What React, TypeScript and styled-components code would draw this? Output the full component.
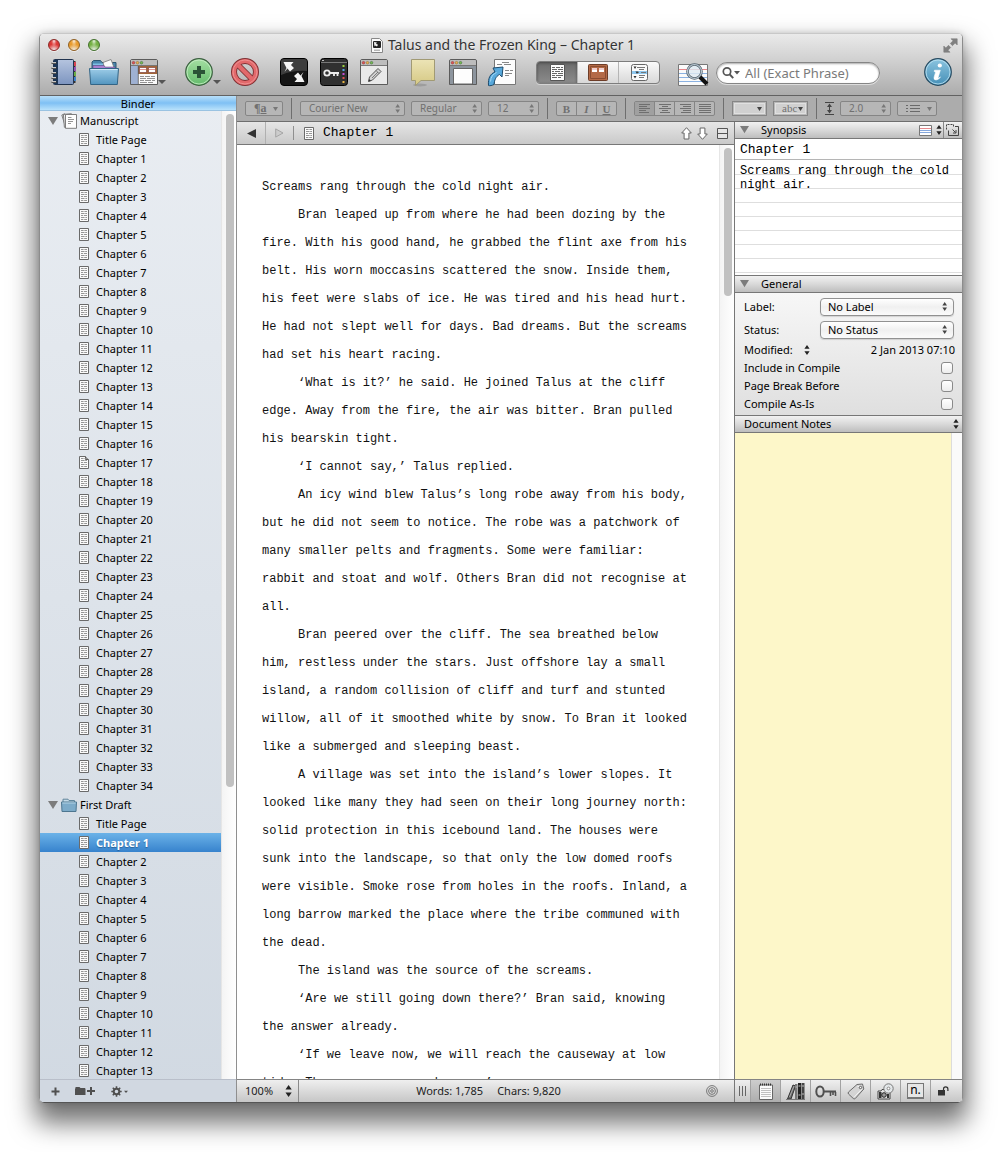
import React from "react";
import styled, { createGlobalStyle, css } from "styled-components";

const ui = `"Noto Sans", "Open Sans", "Liberation Sans", sans-serif`;
const mono = `"Liberation Mono", "Courier New", monospace`;
const metal = "linear-gradient(#f2f2f2, #d9d9d9 50%, #bdbdbd)";

const GlobalStyle = createGlobalStyle`
  *, *::before, *::after { box-sizing: border-box; }
  body { margin: 0; background: #fff; font: 11px/16px ${ui}; color: #000; }
  button, select, input, textarea { font: inherit; color: inherit; margin: 0; }
  button { padding: 0; border: 0; background: none; }
  svg { display: block; flex: none; }
  h1, h2, p, ul, dl, dt, dd { margin: 0; padding: 0; font-weight: inherit; font-size: inherit; }
  ul { list-style: none; }
`;

const Desktop = styled.div`
  display: flex;
  height: 100vh;
  min-height: 600px;
  padding: 33px 38px 49px 39px;
  overflow: hidden;
`;

const Window = styled.main`
  flex: 1;
  min-width: 0;
  display: flex;
  flex-direction: column;
  border: 1px solid #8c8c8c;
  border-top-color: #c8c8c8;
  border-bottom-color: #555;
  border-radius: 5px;
  overflow: hidden;
  box-shadow: 0 16px 26px 4px rgba(0, 0, 0, 0.56), 0 0 6px rgba(0, 0, 0, 0.15);
`;

/* ---------- title bar and toolbar ---------- */

const Chrome = styled.header`
  flex: none;
  background: linear-gradient(#eaeaea, #cfcfcf 45%, #acacac);
  border-bottom: 1px solid #626262;
`;

const TitleBar = styled.div`
  height: 22px;
  display: grid;
  grid-template-columns: 1fr auto 1fr;
  align-items: center;
  padding: 0 4px 0 8px;
`;

const Lights = styled.div`
  display: flex;
  gap: 8px;
`;

const Light = styled.button<{ $hue: string; $edge: string }>`
  width: 12px;
  height: 12px;
  border-radius: 50%;
  border: 1px solid ${(p) => p.$edge};
  background: radial-gradient(ellipse at 50% 10%, #fffd 0, #fff4 25%, transparent 42%),
    radial-gradient(circle at 50% 100%, #fff9 0, ${(p) => p.$hue} 55%);
  box-shadow: 0 1px 0 #fff8;
`;

const Title = styled.h1`
  display: flex;
  align-items: center;
  gap: 5px;
  font-size: 14px;
  line-height: 20px;
  color: #333;
  text-shadow: 0 1px 0 #fff8;
`;

const ZoomButton = styled.button`
  justify-self: end;
`;

const Toolbar = styled.div`
  display: flex;
  align-items: flex-start;
  gap: 17px;
  height: 39px;
  padding: 0 8px;
`;

const ToolGroup = styled.div`
  display: flex;
  gap: 8px;
`;

const Tool = styled.button<{ $menu?: boolean }>`
  display: flex;
  align-items: center;
  width: ${(p) => (p.$menu ? 38 : 32)}px;
  height: 32px;
`;

const MenuMark = styled.span`
  align-self: flex-end;
  margin: 0 0 4px -2px;
  border: 4px solid transparent;
  border-top-color: #555;
  border-bottom: 0;
`;

const Segments = styled.div`
  display: flex;
  margin-top: 5px;
  width: 124px;
  height: 23px;
  border: 1px solid #7d7d7d;
  border-radius: 4px;
  overflow: hidden;
  background: linear-gradient(#fafafa, #d8d8d8);
  box-shadow: 0 1px 0 #fff6;
`;

const Segment = styled.button<{ $on?: boolean }>`
  flex: 1;
  display: grid;
  place-items: center;
  ${(p) => p.$on && css`
    background: linear-gradient(#6c6c6c, #8b8b8b);
    box-shadow: inset 0 1px 3px #333a;
  `}
  & + & { border-left: 1px solid #b5b5b5; }
`;

const SearchBox = styled.label`
  display: flex;
  align-items: center;
  gap: 5px;
  width: 164px;
  height: 22px;
  margin-top: 6px;
  padding: 0 8px 0 5px;
  border: 1px solid #858585;
  border-radius: 11px;
  background: #fff;
  box-shadow: inset 0 1px 2px #0005, 0 1px 0 #fff8;
`;

const SearchInput = styled.input`
  flex: 1;
  min-width: 0;
  padding: 0;
  border: 0;
  outline: 0;
  background: none;
  font-size: 13px;
  line-height: 18px;
  &::placeholder { color: #7a7a7a; opacity: 1; }
`;

const FieldWithIcon = styled.div`
  display: flex;
  gap: 7px;
`;

const InfoTool = styled(Tool)`
  margin-left: auto;
`;

/* ---------- body ---------- */

const Body = styled.div`
  flex: 1;
  min-height: 0;
  display: flex;
`;

const Binder = styled.nav`
  flex: none;
  width: 197px;
  display: flex;
  flex-direction: column;
  border-right: 1px solid #8f8f8f;
  background: linear-gradient(#e9edf2, #d1d9e2);
`;

const BinderTitle = styled.h2`
  flex: none;
  height: 15px;
  text-align: center;
  line-height: 15px;
  background: linear-gradient(#b8e0fa, #7fc0f4 50%, #b9e2fb);
  border-bottom: 1px solid #9ac3e2;
`;

const Scroller = styled.div`
  flex: 1;
  min-height: 0;
  display: flex;
`;

const Track = styled.div`
  flex: none;
  width: 15px;
  padding: 3px 3px 3px 4px;
  border-left: 1px solid #e6e6e6;
  background: linear-gradient(90deg, #f4f4f4, #fff);
`;

const Thumb = styled.div<{ $share: number }>`
  height: ${(p) => p.$share}%;
  width: 8px;
  border-radius: 4px;
  background: #c1c1c1;
`;

const Tree = styled.ul`
  flex: 1;
  min-width: 0;
  overflow: hidden;
`;

const Row = styled.button<{ $group?: boolean; $on?: boolean }>`
  display: flex;
  align-items: center;
  gap: ${(p) => (p.$group ? 3 : 7)}px;
  width: 100%;
  height: 19px;
  padding-left: ${(p) => (p.$group ? 8 : 39)}px;
  text-align: left;
  white-space: nowrap;
  ${(p) => p.$on && css`
    color: #fff;
    font-weight: 700;
    text-shadow: 0 1px 1px #0246;
    background: linear-gradient(#6bb2e8, #3783cd);
  `}
`;

const BinderFooter = styled.div`
  flex: none;
  display: flex;
  align-items: center;
  gap: 15px;
  height: 23px;
  padding-left: 11px;
  background: #d1d8e1;
  border-top: 1px solid #b9bfca;
`;

const Work = styled.div`
  flex: 1;
  min-width: 0;
  display: flex;
  flex-direction: column;
`;

/* ---------- format bar ---------- */

const FormatBar = styled.div`
  flex: none;
  display: flex;
  align-items: center;
  gap: 8px;
  height: 26px;
  padding: 0 8px;
  background: #acacac;
  border-bottom: 1px solid #6e6e6e;
  color: #707070;
`;

const FormatGroup = styled.div`
  display: flex;
  align-items: center;
  gap: 6px;
`;

const Divider = styled.span`
  width: 1px;
  height: 21px;
  background: #6e6e6e;
`;

const Chip = styled.button<{ $w: number; $light?: boolean }>`
  display: flex;
  align-items: center;
  justify-content: space-between;
  width: ${(p) => p.$w}px;
  height: 15px;
  padding: 0 4px 0 8px;
  border: 1px solid #858585;
  border-radius: ${(p) => (p.$light ? 0 : 2)}px;
  background: ${(p) => (p.$light ? "#d0d0d0" : "#b6b6b6")};
  box-shadow: ${(p) => (p.$light ? "inset 0 0 0 1px #b8b8b8, inset 0 0 0 2px #e0e0e0" : "none")};
  font-size: 10px;
  line-height: 12px;
`;

const ChipMark = styled.span`
  font: 700 12px/13px "Liberation Serif", serif;
`;

const ChipWord = styled.span`
  font: 11px/13px "Liberation Serif", serif;
`;

const PopSelect = styled.label<{ $w: number }>`
  display: flex;
  align-items: center;
  width: ${(p) => p.$w}px;
  height: 15px;
  padding: 0 4px 0 8px;
  border: 1px solid #858585;
  border-radius: 2px;
  background: #b6b6b6;
`;

const BareSelect = styled.select`
  appearance: none;
  flex: 1;
  min-width: 0;
  padding: 0;
  border: 0;
  outline: 0;
  background: none;
  font-size: 10px;
  line-height: 13px;
`;

const Joined = styled.div`
  display: flex;
  height: 15px;
  border: 1px solid #858585;
  border-radius: 2px;
  background: #b6b6b6;
`;

const JoinedButton = styled.button<{ $on?: boolean; $look?: "b" | "i" | "u" }>`
  width: 20px;
  display: grid;
  place-items: center;
  font: 700 11px/12px "Liberation Serif", serif;
  font-style: ${(p) => (p.$look === "i" ? "italic" : "normal")};
  text-decoration: ${(p) => (p.$look === "u" ? "underline" : "none")};
  background: ${(p) => (p.$on ? "#a0a0a0" : "none")};
  &:first-child { width: 19px; }
  & + & { border-left: 1px solid #858585; }
`;

/* ---------- editor ---------- */

const Panes = styled.div`
  flex: 1;
  min-height: 0;
  display: flex;
`;

const Editor = styled.section`
  flex: 1;
  min-width: 0;
  display: flex;
  flex-direction: column;
  background: #fff;
`;

const EditorHead = styled.div`
  flex: none;
  display: flex;
  align-items: center;
  height: 23px;
  background: linear-gradient(#e6e6e6, #c9c9c9);
  border-bottom: 1px solid #777;
`;

const NavButton = styled.button`
  display: grid;
  place-items: center;
  width: 28px;
  height: 22px;
  & + & { border-left: 1px solid #b0b0b0; }
`;

const DocName = styled.h2`
  flex: 1;
  display: flex;
  align-items: center;
  gap: 9px;
  padding-left: 10px;
  height: 14px;
  border-left: 1px solid #8f8f8f;
  font: 13px/16px ${mono};
`;

const HeadTools = styled.div`
  display: flex;
  align-items: center;
  gap: 5px;
  padding-right: 6px;
`;

const NavSplit = styled.button`
  padding-left: 4px;
`;

const Page = styled.article`
  flex: 1;
  min-width: 0;
  overflow: hidden;
  padding: 28px 30px 0 25px;
  font: 12px/28px ${mono};
  color: #111;
`;

const Paragraph = styled.p<{ $first?: boolean }>`
  text-indent: ${(p) => (p.$first ? 0 : 36)}px;
`;

const StatusBar = styled.footer`
  flex: none;
  display: flex;
  align-items: center;
  height: 23px;
  background: linear-gradient(#efefef, #c6c6c6);
  border-top: 1px solid #848484;
  color: #222;
`;

const ZoomLevel = styled.button`
  display: flex;
  align-items: center;
  justify-content: space-between;
  width: 62px;
  height: 22px;
  padding: 0 6px 0 8px;
  border-right: 1px solid #8a8a8a;
`;

const Counts = styled.div`
  flex: 1;
  display: flex;
  justify-content: center;
  gap: 14px;
  padding-right: 28px;
`;

const TargetButton = styled.button`
  padding-right: 16px;
`;

/* ---------- inspector ---------- */

const Inspector = styled.aside`
  flex: none;
  width: 228px;
  display: flex;
  flex-direction: column;
  border-left: 1px solid #777;
  background: #ececec;
`;

const SectionHead = styled.div<{ $ruled?: boolean }>`
  flex: none;
  display: flex;
  align-items: center;
  height: ${(p) => (p.$ruled ? 18 : 17)}px;
  padding-left: 5px;
  background: ${metal};
  border-bottom: 1px solid #777;
  border-top: ${(p) => (p.$ruled ? "1px solid #777" : "0")};
`;

const SectionTitle = styled.h2<{ $plain?: boolean }>`
  flex: 1;
  padding-left: ${(p) => (p.$plain ? 4 : 12)}px;
`;

const CardTools = styled.div`
  display: flex;
  align-items: center;
  gap: 4px;
  padding-right: 3px;
`;

const CornerTool = styled.button`
  height: 16px;
  display: grid;
  place-items: center;
  padding-left: 2px;
  margin-left: -3px;
  border-left: 1px solid #888;
`;

const CardTitle = styled.input`
  flex: none;
  height: 21px;
  width: 100%;
  padding: 0 5px;
  border: 0;
  border-bottom: 1px solid #b5b5b5;
  outline: 0;
  background: #fff;
  font: 13px/16px ${mono};
`;

const CardText = styled.textarea`
  flex: none;
  display: block;
  width: 100%;
  height: 115px;
  padding: 4px 5px;
  border: 0;
  outline: 0;
  resize: none;
  overflow: hidden;
  background: repeating-linear-gradient(#fff 0 13px, #dedede 13px 14px) 0 1px;
  font: 12px/14px ${mono};
`;

const Fields = styled.div`
  flex: none;
  padding: 2px 7px 2px 9px;
  background: linear-gradient(#f7f7f7, #dfdfdf);
`;

const Field = styled.div<{ $tall?: boolean }>`
  display: flex;
  align-items: center;
  height: ${(p) => (p.$tall ? 23 : 18)}px;
`;

const FieldName = styled.label`
  flex: 1;
`;

const ModifiedName = styled.span`
  flex: 1;
  display: flex;
  align-items: center;
  gap: 11px;
`;

const FieldSelect = styled.span`
  display: flex;
  align-items: center;
  width: 134px;
  height: 18px;
  margin-right: 1px;
  padding: 0 6px 0 7px;
  border: 1px solid #919191;
  border-radius: 4px;
  background: linear-gradient(#fff, #f0f0f0 50%, #fbfbfb);
  box-shadow: 0 1px 1px #0002;
`;

const FieldSelectInput = styled(BareSelect)`
  font-size: 11px;
  line-height: 16px;
`;

const Check = styled.input`
  appearance: none;
  width: 12px;
  height: 12px;
  margin-right: 2px;
  border: 1px solid #8a8a8a;
  border-radius: 3px;
  background: linear-gradient(#fff, #ededed);
`;

const NotesArea = styled.div`
  flex: 1;
  min-height: 0;
  display: flex;
`;

const Notes = styled.textarea`
  flex: 1;
  min-width: 0;
  padding: 5px;
  border: 0;
  outline: 0;
  resize: none;
  background: #fdf7c9;
`;

const NotesTrack = styled.div`
  width: 11px;
  border-left: 1px solid #dcdcdc;
  background: #fafafa;
`;

const InspectorTabs = styled.div`
  flex: none;
  display: flex;
  height: 23px;
  border-top: 1px solid #848484;
  background: linear-gradient(#efefef, #c6c6c6);
`;

const Tab = styled.button<{ $on?: boolean; $w?: number }>`
  width: ${(p) => p.$w ?? 30}px;
  display: grid;
  place-items: center;
  border-right: 1px solid #a2a2a2;
  background: ${(p) => (p.$on ? "linear-gradient(#cdcdcd, #adadad)" : "none")};
  &:last-child { width: auto; flex: 1; border-right: 0; padding-right: 7px; }
`;

/* ---------- drawings ---------- */

const Updown = ({ c = "#222", s = 10 }: { c?: string; s?: number }) => (
  <svg width={(s * 6) / 10} height={s} viewBox="0 0 6 10" fill={c}>
    <path d="M3 0 5.6 3.8H.4zM3 10 .4 6.2h5.2z" />
  </svg>
);
const Down = ({ c = "#666", w = 6 }: { c?: string; w?: number }) => (
  <svg width={w} height={w * 0.8} viewBox="0 0 10 8" fill={c}><path d="M0 0h10L5 8z" /></svg>
);

const PageIcon = ({ fold }: { fold?: boolean }) => (
  <svg width="10" height="13" viewBox="0 0 10 13">
    <path d={fold ? "M.5.5h6l3 3v9h-9z" : "M.5.5h9v12h-9z"} fill="#fbfbfb" stroke="#6a6a6a" />
    {fold && <path d="M6.5.5v3h3" fill="#ccc" stroke="#5c5c5c" />}
    <path d="M2 2.5h2.6M5.4 2.5H8M2 4.5h3.6M6.2 4.5H8M2 6.5h2M4.8 6.5H8M2 8.5h3.6M6.4 8.5H8M2 10.5h2.4M5.2 10.5H8" stroke="#8a8a8a" strokeWidth=".9" />
  </svg>
);

const StackIcon = () => (
  <svg width="16" height="16" viewBox="0 0 16 16" stroke="#707070" strokeWidth=".9">
    <path d="m.8 2 3-1.2 4 11.5-3.4 1.2z" fill="#e9e9e9" />
    <path d="m2.4 1.4 8-.7.6 13-7.6.6z" fill="#f1f1f1" />
    <path d="M4.5 1.5h11v13.8h-11z" fill="#fdfdfd" />
    <path d="M7 4.5h3.5M7 6.5h6M7 8.5h5M7 10.5h3" stroke="#888" />
  </svg>
);

const FolderIcon = () => (
  <svg width="16" height="14" viewBox="0 0 16 14">
    <path d="M2 3V1.2h5l1 1.3h5.5V5H2z" fill="#c5dbe8" stroke="#60869c" />
    <path d="M.5 4h15l-.5 9.500H1z" fill="#7dabc9" stroke="#4d7690" />
    <path d="M1.3 5h13.4" stroke="#b4d3e5" />
  </svg>
);

const TitleDoc = () => (
  <svg width="12" height="15" viewBox="0 0 12 15">
    <path d="M.5.5h8l3 3v11H.5z" fill="#fafafa" stroke="#888" />
    <rect x="2" y="3" width="8" height="7" rx="1" fill="#222" />
    <path d="m3 4 3 .4-1 1.3 2 1-1 1.700-2-1-.6 1.200z" fill="#eee" />
    <path d="M3 12.200h6" stroke="#999" />
  </svg>
);

const ResizeArrows = () => (
  <svg width="15" height="15" viewBox="0 0 15 15" fill="#808080" stroke="#808080" strokeWidth=".6">
    <path d="M8 .8h6.200V7l-2-2-2.700 2.700-2.200-2.200L10 2.800zM7 14.200H.8V8l2 2 2.700-2.700 2.200 2.200L5 12.200z" />
  </svg>
);

const Notebook = () => (
  <svg width="32" height="32" viewBox="0 0 32 32">
    <defs>
      <linearGradient id="cover" x2="0" y2="1"><stop stopColor="#b5c4df" /><stop offset="1" stopColor="#7d95c0" /></linearGradient>
    </defs>
    <path d="M24 5h3.500v22H24z" fill="#333" />
    <path d="M24.500 6h3.500v4h-3.500z" fill="#d94350" />
    <path d="M24.500 11h3.500v4h-3.500z" fill="#9454b5" />
    <path d="M24.500 16h3.500v4h-3.500z" fill="#6aac45" />
    <path d="M24.500 21h3.500v4h-3.500z" fill="#3f82c8" />
    <rect x="5.500" y="3.500" width="20" height="25" rx="1" fill="url(#cover)" stroke="#22344f" />
    <path d="M6 4h4v24H6z" fill="#1c3656" />
    <path d="M3.500 7h5M3.500 12h5M3.500 17h5M3.500 22h5M3.500 26h5" stroke="#333" strokeWidth="2" />
    <path d="M3.500 6.700h4.500M3.500 11.700h4.500M3.500 16.700h4.500M3.500 21.700h4.500M3.500 25.700h4.500" stroke="#eee" />
  </svg>
);

const BigFolder = () => (
  <svg width="32" height="32" viewBox="0 0 32 32">
    <defs>
      <linearGradient id="fold" x2="0" y2="1"><stop stopColor="#9dcce8" /><stop offset="1" stopColor="#5295bf" /></linearGradient>
    </defs>
    <path d="M4 12V6l1.500-1.500h7L14 6.500h14V13H4z" fill="#4b86ad" stroke="#2e5570" />
    <path d="M5 7.500h13v2H5z" fill="#7fc0e6" />
    <path d="m15 6.500 8-3 3 8-9 2z" fill="#fafafa" stroke="#777" strokeWidth=".8" />
    <path d="M5 9.500h11l1 1.500h10v2H5z" fill="#a97fd0" stroke="#56417a" strokeWidth=".5" />
    <path d="M1.500 12.500h29l-1.200 16H2.700z" fill="url(#fold)" stroke="#336586" />
    <path d="M2.500 13.500h27" stroke="#cfe8f6" />
  </svg>
);

const MiniWindow = ({ children, body = "#e9e9e9" }: { children?: React.ReactNode; body?: string }) => (
  <svg width="32" height="32" viewBox="0 0 32 32">
    <path d="M2.500 5a1.500 1.500 0 0 1 1.500-1.500h24A1.500 1.500 0 0 1 29.500 5v23.500h-27z" fill={body} stroke="#5b5b5b" />
    <path d="M3 5a1 1 0 0 1 1-1h24a1 1 0 0 1 1 1v4H3z" fill="#bdbdbd" />
    <path d="M3 9.500h26" stroke="#777" />
    <circle cx="5.500" cy="6.700" r="1.300" fill="#e05252" stroke="#833" strokeWidth=".5" />
    <circle cx="9.500" cy="6.700" r="1.300" fill="#e9b14c" stroke="#863" strokeWidth=".5" />
    <circle cx="13.500" cy="6.700" r="1.300" fill="#79bb51" stroke="#363" strokeWidth=".5" />
    {children}
  </svg>
);

const LayoutIcon = () => (
  <MiniWindow body="#fafafa">
    <path d="M3 10h7v18H3z" fill="#9fb1d2" />
    <path d="M10 10h19v8H10z" fill="#a26537" />
    <path d="M11.500 11.500h7v5h-7zM20.500 11.500h7v5h-7z" fill="#fff" stroke="#733" strokeWidth=".6" />
    <path d="M12 13.500h6M21 13.500h6" stroke="#d77" strokeWidth=".8" />
    <path d="M12 20.500h4M17 20.500h5M23 20.500h4M12 22.500h6M19 22.500h8M12 24.500h4M17 24.500h6M24 24.500h3M12 26.500h7M20 26.500h5" stroke="#777" strokeWidth=".8" />
    <path d="M10.300 10v18" stroke="#555" strokeWidth=".8" />
  </MiniWindow>
);

const AddIcon = () => (
  <svg width="32" height="32" viewBox="0 0 32 32">
    <defs><linearGradient id="add" x2="0" y2="1"><stop stopColor="#a5dfa3" /><stop offset="1" stopColor="#64bb6c" /></linearGradient></defs>
    <circle cx="16" cy="16" r="13.300" fill="url(#add)" stroke="#3c5f40" strokeWidth="1.200" />
    <circle cx="16" cy="16" r="12" fill="none" stroke="#c8efc6" strokeWidth=".8" />
    <path d="M14 10h4v4h4v4h-4v4h-4v-4h-4v-4h4z" fill="#2a5236" />
  </svg>
);

const StopIcon = () => (
  <svg width="32" height="32" viewBox="0 0 32 32" fill="none">
    <circle cx="16" cy="16" r="11" stroke="#7e3033" strokeWidth="6" />
    <path d="m8.500 8.500 15 15" stroke="#7e3033" strokeWidth="6" />
    <circle cx="16" cy="16" r="11" stroke="#e2696b" strokeWidth="4.200" />
    <path d="m8.500 8.500 15 15" stroke="#e2696b" strokeWidth="4.200" />
    <circle cx="16" cy="16" r="12" stroke="#f09b9b" strokeWidth=".8" />
  </svg>
);

const ComposeIcon = () => (
  <svg width="32" height="32" viewBox="0 0 32 32">
    <rect x="2.500" y="2.500" width="27" height="27" rx="3.500" fill="#161616" stroke="#000" />
    <path d="M3 6a3 3 0 0 1 3-3h20a3 3 0 0 1 3 3v9q-13-1-26 4z" fill="#3d3d3d" />
    <path d="M5.500 6h10l-2.500 3 3 3-4 3.500-2.500-3L6.500 16l2-4z" fill="#f5f5f5" />
    <path d="M26.500 26h-10l2.500-3-3-3 4-3.500 2.500 3L25.500 16l-2 4z" fill="#f5f5f5" />
  </svg>
);

const KeywordsIcon = () => (
  <svg width="32" height="32" viewBox="0 0 32 32">
    <rect x="2.500" y="2.500" width="27" height="27" rx="3" fill="#303030" stroke="#000" />
    <path d="M3 6.500h26" stroke="#777" />
    <path d="M4 4.500h2" stroke="#bbb" />
    <circle cx="9" cy="17" r="2.700" fill="none" stroke="#ececec" strokeWidth="1.800" />
    <path d="M12 17h9M16 17v3M19.500 17v3" stroke="#ececec" strokeWidth="1.800" />
    <path d="M24.500 9h2v2h-2z" fill="#9ad13c" />
    <path d="M24.500 13h2v2h-2z" fill="#4fa7e6" />
    <path d="M24.500 17h2v2h-2z" fill="#c04bd4" />
    <path d="M24.500 21h2v2h-2z" fill="#e05050" />
    <path d="M24.500 25h2v2h-2z" fill="#e8b341" />
  </svg>
);

const PencilWindow = () => (
  <MiniWindow>
    <path d="m10.500 25.500 1-4.500L20 12.500l3 3-8.500 8.500z" fill="#d2d2d2" stroke="#555" />
    <path d="m18 14.500 3 3M14 22l6-6" stroke="#666" strokeWidth=".8" />
    <path d="m10.500 25.500.6-2.500 1.900 1.900z" fill="#333" />
  </MiniWindow>
);

const NoteIcon = () => (
  <svg width="32" height="32" viewBox="0 0 32 32">
    <defs><linearGradient id="note" x2="0" y2="1"><stop stopColor="#ece4b6" /><stop offset="1" stopColor="#d5c883" /></linearGradient></defs>
    <ellipse cx="13" cy="29" rx="7" ry="1.500" fill="#0002" />
    <path d="M4.500 3.500h23v21H14l-5.500 5v-5h-4z" fill="url(#note)" stroke="#a19a74" />
  </svg>
);

const BlankWindow = () => (
  <MiniWindow body="#8d959e">
    <path d="M6.500 12.500h19V28h-19z" fill="#fdfdfd" stroke="#666" />
  </MiniWindow>
);

const ImportIcon = () => (
  <svg width="32" height="32" viewBox="0 0 32 32">
    <path d="M7.500 3.500h21v25h-21z" fill="#fdfdfd" stroke="#777" />
    <path d="M15 6.500h7M10 8.500h5M17 8.500h7M18 14.500h4M23 14.500h3M18 17.500h7M18 19.500h4" stroke="#888" />
    <path d="M1.500 29.500C1 22 3 18 8 16l-2-4 10-1-1 10-2.500-2.500c-4 2-5 6-5.500 10-2 1-4 1.500-5.500 1z" fill="#58a9dc" stroke="#1f4c6d" />
    <path d="M3.500 25.500c.3-4.500 2.500-7.500 6-9" fill="none" stroke="#a5d8f4" />
  </svg>
);

const CorkIcon = () => (
  <svg width="20" height="17" viewBox="0 0 20 17">
    <rect x=".5" y=".5" width="19" height="16" rx="1" fill="#b46a47" stroke="#6d3d28" />
    <path d="M2.500 2.500h15v12h-15z" fill="none" stroke="#8a4c31" />
    <path d="M4 4h5v4H4zM11 4h5v4h-5z" fill="#fff" />
    <path d="M4 5h5M11 5h5" stroke="#e2a0a0" />
  </svg>
);

const DocSegment = () => (
  <svg width="15" height="17" viewBox="0 0 15 17">
    <path d="M.5.5h14v16H.5z" fill="#fcfcfc" stroke="#555" />
    <path d="M2 3.500h3M6 3.500h4M11 3.500h2M2 5.500h5M8 5.500h5M2 7.500h2M5 7.500h5M11 7.500h2M2 9.500h5M8 9.500h5M2 11.500h3M6 11.500h7M2 13.500h5M8 13.500h3" stroke="#666" />
  </svg>
);

const OutlineIcon = () => (
  <svg width="17" height="17" viewBox="0 0 17 17">
    <rect x=".5" y=".5" width="16" height="16" rx="2" fill="#fafafa" stroke="#666" />
    <path d="M1 7h15v3H1z" fill="#8ec7ee" />
    <path d="M6 3.500h8M8 5.500h5M6 8.500h2M10 8.500h5M8 11.500h6M8 13.500h5" stroke="#777" />
    <path d="M2.500 2.500h3L4 5zM4.500 7.500h3L6 10zM2.500 12h3L4 14.500z" fill="#333" />
  </svg>
);

const FindIcon = () => (
  <svg width="32" height="32" viewBox="0 0 32 32">
    <path d="M1.500 8.500h29v21h-29z" fill="#fbfbfb" stroke="#777" />
    <path d="M2 13.500h28" stroke="#e8868c" />
    <path d="M2 17.500h28M2 21.500h28M2 25.500h28" stroke="#8bb2e2" />
    <circle cx="17.500" cy="15.500" r="7" fill="#dfeaf2cc" stroke="#55636e" strokeWidth="2.600" />
    <circle cx="17.500" cy="15.500" r="7" fill="none" stroke="#b8c6d0" strokeWidth="1.200" />
    <path d="m23 21 7 7" stroke="#111" strokeWidth="4" />
  </svg>
);

const Magnifier = () => (
  <svg width="18" height="14" viewBox="0 0 18 14" fill="none">
    <circle cx="5" cy="5.500" r="3.700" stroke="#555" strokeWidth="1.700" />
    <path d="m7.700 8.300 3.500 3.900" stroke="#555" strokeWidth="2" />
    <path d="M12 5h6l-3 3.500z" fill="#555" />
  </svg>
);

const InfoIcon = () => (
  <svg width="32" height="32" viewBox="0 0 32 32">
    <defs><linearGradient id="info" x2="0" y2="1"><stop stopColor="#8cc5e0" /><stop offset="1" stopColor="#458fb7" /></linearGradient></defs>
    <circle cx="16" cy="16" r="13.300" fill="url(#info)" stroke="#284b60" strokeWidth="1.200" />
    <circle cx="16" cy="16" r="12" fill="none" stroke="#bfe3f3" strokeWidth=".8" />
    <circle cx="17.800" cy="9.500" r="2.100" fill="#fff" />
    <path d="M12.500 14.200h5.800l-2.400 8q.8.300 2.600-1.300-1.800 3-4.500 3.100-2.600-.2-1.900-2.800l1.600-5.300-1.500-.3z" fill="#fff" stroke="#fff" strokeWidth=".6" />
  </svg>
);

const AlignIcon = ({ rows }: { rows: number[][] }) => (
  <svg width="12" height="10" viewBox="0 0 12 10" stroke="#6f6f6f">
    {rows.map(([a, b], i) => <path key={i} d={`M${a} ${i * 2 + 0.5}H${b}`} />)}
  </svg>
);

const SpacingIcon = () => (
  <svg width="9" height="13" viewBox="0 0 9 13">
    <path d="M0 .5h9M0 12.500h9M4.500 3v7" stroke="#444" />
    <path d="M4.500 1.500 7 5H2zM4.500 11.500 2 8h5z" fill="#444" />
  </svg>
);

const ListIcon = () => (
  <svg width="14" height="9" viewBox="0 0 14 9" stroke="#6a6a6a">
    <path d="M4 1.500h10M4 4.500h10M4 7.500h10M0 1.500h2M0 4.500h2M0 7.500h2" />
  </svg>
);

const HollowArrow = ({ flip }: { flip?: boolean }) => (
  <svg width="11" height="13" viewBox="0 0 11 13">
    <path d={flip ? "M5.500 12.300.7 7h2.400V1h4.800v6h2.400z" : "M5.500.7.7 6h2.400v6h4.800V6h2.400z"} fill="#fff" stroke="#666" />
  </svg>
);

const SplitIcon = () => (
  <svg width="11" height="11" viewBox="0 0 11 11" fill="#e5e5e5" stroke="#555">
    <path d="M.5.500h10v10H.5zM.5 5.500h10" />
  </svg>
);

const Target = () => (
  <svg width="12" height="12" viewBox="0 0 12 12" fill="none" stroke="#777">
    <circle cx="6" cy="6" r="5.400" /><circle cx="6" cy="6" r="3.400" /><circle cx="6" cy="6" r="1.300" />
  </svg>
);

const CardIcon = () => (
  <svg width="13" height="11" viewBox="0 0 13 11">
    <path d="M.5.500h12v10H.5z" fill="#fff" stroke="#777" />
    <path d="M1 3.500h11" stroke="#e6898d" /><path d="M1 5.500h11M1 7.500h11" stroke="#86a8dd" />
  </svg>
);

const CornerIcon = () => (
  <svg width="13" height="12" viewBox="0 0 13 12" fill="none" stroke="#444">
    <path d="M.5 5.500v-5h7v2" strokeDasharray="2 1" />
    <path d="M9 2.500h3.500v9h-10V6.500" />
    <path d="m6.500 5.500 3 3M10 6v3H7" />
  </svg>
);

const PlusIcon = () => (
  <svg width="9" height="9" viewBox="0 0 9 9" fill="#505050"><path d="M3.500.5h2v3h3v2h-3v3h-2v-3h-3v-2h3z" /></svg>
);
const FolderPlus = () => (
  <svg width="21" height="10" viewBox="0 0 21 10" fill="#505050">
    <path d="M0 2.500h10.500V9H0zM.5 1h4l1 1h4.500v.5H.5zM15 1h2v3h3v2h-3v3h-2V6h-3V4h3z" />
  </svg>
);
const Gear = () => (
  <svg width="17" height="11" viewBox="0 0 17 11">
    <circle cx="5.500" cy="5.500" r="2.800" fill="none" stroke="#505050" strokeWidth="2" />
    <path d="M5.500.3v2M5.500 8.700v2M.3 5.500h2M8.700 5.500h2M1.800 1.800l1.400 1.400M7.800 7.800l1.400 1.400M1.800 9.200l1.400-1.400M7.800 3.200l1.400-1.400" stroke="#505050" strokeWidth="1.600" />
    <path d="M13 4.700h4l-2 2.200z" fill="#505050" />
  </svg>
);

const Grip = () => (
  <svg width="9" height="10" viewBox="0 0 9 10" stroke="#666"><path d="M1.500 0v10M4.500 0v10M7.500 0v10" /></svg>
);
const PadIcon = () => (
  <svg width="14" height="17" viewBox="0 0 14 17">
    <path d="M.5 2h13v14.500H.5z" fill="#fbfbfb" stroke="#666" />
    <path d="M1 1.500h12" stroke="#333" strokeWidth="2" strokeDasharray="1 1" />
    <path d="M2 5.500h10M2 7.500h10M2 9.500h10M2 11.500h10M2 13.500h10" stroke="#c0c0c0" />
  </svg>
);
const BooksIcon = () => (
  <svg width="19" height="18" viewBox="0 0 19 18">
    <path d="m1.500 17 5.500-14 2.500 1L5 17z" fill="#6b6b6b" stroke="#333" />
    <path d="m3.500 15 4.500-11" stroke="#aaa" />
    <path d="M9 2h2.500v15H9z" fill="#777" /><path d="M12 1h3v16h-3z" fill="#222" /><path d="M15.500 1h3v16h-3z" fill="#444" />
    <path d="M12.500 4h2M12.500 13h2M16 4h2M16 12h2M9.500 5h1.500" stroke="#bbb" />
    <path d="M0 17.500h19" stroke="#777" />
  </svg>
);
const KeyIcon = () => (
  <svg width="22" height="13" viewBox="0 0 22 13" fill="none" stroke="#505050">
    <ellipse cx="5" cy="6.500" rx="3.700" ry="5" strokeWidth="2" />
    <path d="M8.500 6.500H21" strokeWidth="2.200" /><path d="M15.500 7v4M18 7v3M20.500 7v4" strokeWidth="1.600" />
  </svg>
);
const TagIcon = () => (
  <svg width="18" height="17" viewBox="0 0 18 17">
    <path d="M10 1.500 15.500 1 16.800 6l-8.500 9.500q-1 .8-2 0L1.500 11q-.8-1 0-2z" fill="#d4d4d4" stroke="#6a6a6a" />
    <path d="M10.500 3.500 14 3.200l.7 2.800-7.400 8" fill="none" stroke="#f4f4f4" />
    <circle cx="13.500" cy="4.500" r="1.200" fill="#fff" stroke="#555" />
  </svg>
);
const CameraIcon = () => (
  <svg width="17" height="17" viewBox="0 0 17 17">
    <path d="M1 8h3l1-1.500h4L10 8h3v8H1z" fill="#e6e6e6" stroke="#444" />
    <path d="M2 9h2.500v6H2zM10 11h2v4h-2z" fill="#333" />
    <circle cx="7" cy="12" r="2.300" fill="#999" stroke="#222" />
    <circle cx="11.500" cy="5.500" r="4.700" fill="#e3e7e9" stroke="#777" />
    <circle cx="11.500" cy="5.500" r="1.400" fill="#fff" stroke="#888" />
  </svg>
);

const NoteMark = styled.span`
  display: block;
  width: 17px;
  height: 16px;
  border: 1px solid #777;
  border-bottom-width: 2px;
  background: #e6e6e6;
  font-size: 12px;
  line-height: 12px;
`;

const LockIcon = () => (
  <svg width="11" height="10" viewBox="0 0 11 10">
    <path d="M0 4h7v5.500H0z" fill="#333" />
    <path d="M5.500 4.500V3a2.200 2.200 0 0 1 4.400 0v2" fill="none" stroke="#333" strokeWidth="1.200" />
  </svg>
);

/* ---------- content ---------- */

const chapters = (n: number) => ["Title Page", ...Array.from({ length: n }, (_, i) => `Chapter ${i + 1}`)];

const folders = [
  { name: "Manuscript", icon: <StackIcon />, items: chapters(34), folded: 17, active: -1 },
  { name: "First Draft", icon: <FolderIcon />, items: chapters(13), folded: -1, active: 1 },
];

const story = [
  "Screams rang through the cold night air.",
  "Bran leaped up from where he had been dozing by the fire. With his good hand, he grabbed the flint axe from his belt. His worn moccasins scattered the snow. Inside them, his feet were slabs of ice. He was tired and his head hurt. He had not slept well for days. Bad dreams. But the screams had set his heart racing.",
  "‘What is it?’ he said. He joined Talus at the cliff edge. Away from the fire, the air was bitter. Bran pulled his bearskin tight.",
  "‘I cannot say,’ Talus replied.",
  "An icy wind blew Talus’s long robe away from his body, but he did not seem to notice. The robe was a patchwork of many smaller pelts and fragments. Some were familiar: rabbit and stoat and wolf. Others Bran did not recognise at all.",
  "Bran peered over the cliff. The sea breathed below him, restless under the stars. Just offshore lay a small island, a random collision of cliff and turf and stunted willow, all of it smoothed white by snow. To Bran it looked like a submerged and sleeping beast.",
  "A village was set into the island’s lower slopes. It looked like many they had seen on their long journey north: solid protection in this icebound land. The houses were sunk into the landscape, so that only the low domed roofs were visible. Smoke rose from holes in the roofs. Inland, a long barrow marked the place where the tribe communed with the dead.",
  "The island was the source of the screams.",
  "‘Are we still going down there?’ Bran said, knowing the answer already.",
  "‘If we leave now, we will reach the causeway at low tide. Then we can cross by now.’",
];

const alignments = [
  { name: "Left", rows: [[0, 11], [0, 8], [0, 11], [0, 7], [0, 10]] },
  { name: "Center", rows: [[0, 12], [3, 9], [0, 12], [3, 9], [1, 11]] },
  { name: "Right", rows: [[1, 12], [4, 12], [1, 12], [4, 12], [2, 12]] },
  { name: "Justify", rows: [[0, 12], [0, 12], [0, 12], [0, 12], [0, 12]] },
];

const Pop = ({ name, value, w }: { name: string; value: string; w: number }) => (
  <PopSelect $w={w}>
    <BareSelect aria-label={name} defaultValue={value}><option>{value}</option></BareSelect>
    <Updown c="#777" s={9} />
  </PopSelect>
);

const MetaSelect = ({ id, name, value }: { id: string; name: string; value: string }) => (
  <Field $tall>
    <FieldName htmlFor={id}>{name}</FieldName>
    <FieldSelect>
      <FieldSelectInput id={id} defaultValue={value}><option>{value}</option></FieldSelectInput>
      <Updown c="#444" s={9} />
    </FieldSelect>
  </Field>
);

export default function App() {
  return (
    <Desktop>
      <GlobalStyle />
      <Window>
        <Chrome>
          <TitleBar>
            <Lights>
              <Light aria-label="Close" $hue="#dc3735" $edge="#8a2a28" />
              <Light aria-label="Minimize" $hue="#e99b2c" $edge="#8f5f22" />
              <Light aria-label="Zoom" $hue="#74b043" $edge="#42702c" />
            </Lights>
            <Title><TitleDoc />Talus and the Frozen King – Chapter 1</Title>
            <ZoomButton aria-label="Full screen"><ResizeArrows /></ZoomButton>
          </TitleBar>
          <Toolbar>
            <ToolGroup>
              <Tool aria-label="Binder"><Notebook /></Tool>
              <Tool aria-label="Collections"><BigFolder /></Tool>
              <Tool aria-label="Layout" $menu><LayoutIcon /><MenuMark /></Tool>
            </ToolGroup>
            <ToolGroup>
              <Tool aria-label="Add" $menu><AddIcon /><MenuMark /></Tool>
              <Tool aria-label="Trash"><StopIcon /></Tool>
            </ToolGroup>
            <ToolGroup>
              <Tool aria-label="Compose"><ComposeIcon /></Tool>
              <Tool aria-label="Keywords"><KeywordsIcon /></Tool>
              <Tool aria-label="Edit"><PencilWindow /></Tool>
            </ToolGroup>
            <ToolGroup>
              <Tool aria-label="Comment"><NoteIcon /></Tool>
              <Tool aria-label="Quick reference"><BlankWindow /></Tool>
              <Tool aria-label="Compile"><ImportIcon /></Tool>
            </ToolGroup>
            <Segments>
              <Segment $on aria-label="Document"><DocSegment /></Segment>
              <Segment aria-label="Corkboard"><CorkIcon /></Segment>
              <Segment aria-label="Outline"><OutlineIcon /></Segment>
            </Segments>
            <FieldWithIcon>
              <Tool aria-label="Find synopsis"><FindIcon /></Tool>
              <SearchBox>
                <Magnifier />
                <SearchInput aria-label="Search" placeholder="All (Exact Phrase)" />
              </SearchBox>
            </FieldWithIcon>
            <InfoTool aria-label="Inspector"><InfoIcon /></InfoTool>
          </Toolbar>
        </Chrome>

        <Body>
          <Binder>
            <BinderTitle>Binder</BinderTitle>
            <Scroller>
              <Tree>
                {folders.map((f) => (
                  <li key={f.name}>
                    <Row $group><Down c="#7c7c7c" w={10} />{f.icon}{f.name}</Row>
                    <ul>
                      {f.items.map((name, i) => (
                        <li key={name}>
                          <Row $on={i === f.active}><PageIcon fold={i === f.folded} />{name}</Row>
                        </li>
                      ))}
                    </ul>
                  </li>
                ))}
              </Tree>
              <Track><Thumb $share={70} /></Track>
            </Scroller>
            <BinderFooter>
              <button aria-label="Add text"><PlusIcon /></button>
              <button aria-label="Add folder"><FolderPlus /></button>
              <button aria-label="Actions"><Gear /></button>
            </BinderFooter>
          </Binder>

          <Work>
            <FormatBar>
              <Chip $w={38}><ChipMark>¶<u>a</u></ChipMark><Down c="#777" w={5} /></Chip>
              <Divider />
              <FormatGroup>
                <Pop name="Font" value="Courier New" w={105} />
                <Pop name="Style" value="Regular" w={71} />
                <Pop name="Size" value="12" w={51} />
              </FormatGroup>
              <Divider />
              <Joined>
                <JoinedButton $look="b">B</JoinedButton>
                <JoinedButton $look="i">I</JoinedButton>
                <JoinedButton $look="u">U</JoinedButton>
              </Joined>
              <Divider />
              <Joined>
                {alignments.map((a, i) => (
                  <JoinedButton key={a.name} $on={i === 0} aria-label={a.name}><AlignIcon rows={a.rows} /></JoinedButton>
                ))}
              </Joined>
              <Divider />
              <FormatGroup>
                <Chip $w={35} $light aria-label="Text colour"><span /><Down c="#444" w={5} /></Chip>
                <Chip $w={35} $light><ChipWord>abc</ChipWord><Down c="#444" w={5} /></Chip>
              </FormatGroup>
              <Divider />
              <FormatGroup>
                <SpacingIcon />
                <Pop name="Line spacing" value="2.0" w={51} />
                <Chip $w={40} aria-label="Lists"><ListIcon /><Down c="#777" w={5} /></Chip>
              </FormatGroup>
            </FormatBar>

            <Panes>
              <Editor>
                <EditorHead>
                  <NavButton aria-label="Back">
                    <svg width="9" height="9" viewBox="0 0 9 9"><path d="M9 0v9L0 4.500z" fill="#333" /></svg>
                  </NavButton>
                  <NavButton aria-label="Forward">
                    <svg width="9" height="10" viewBox="0 0 9 10"><path d="M.7.900v8.200L8 5z" fill="#ccc" stroke="#a5a5a5" /></svg>
                  </NavButton>
                  <DocName><PageIcon />Chapter 1</DocName>
                  <HeadTools>
                    <button aria-label="Previous document"><HollowArrow /></button>
                    <button aria-label="Next document"><HollowArrow flip /></button>
                    <NavSplit aria-label="Split editor"><SplitIcon /></NavSplit>
                  </HeadTools>
                </EditorHead>
                <Scroller>
                  <Page>
                    {story.map((text, i) => <Paragraph key={i} $first={i === 0}>{text}</Paragraph>)}
                  </Page>
                  <Track><Thumb $share={16} /></Track>
                </Scroller>
                <StatusBar>
                  <ZoomLevel>100%<Updown s={12} /></ZoomLevel>
                  <Counts><span>Words: 1,785</span><span>Chars: 9,820</span></Counts>
                  <TargetButton aria-label="Target"><Target /></TargetButton>
                </StatusBar>
              </Editor>

              <Inspector>
                <SectionHead>
                  <Down c="#7c7c7c" w={9} />
                  <SectionTitle>Synopsis</SectionTitle>
                  <CardTools>
                    <CardIcon />
                    <Updown s={10} />
                    <CornerTool aria-label="Generate synopsis"><CornerIcon /></CornerTool>
                  </CardTools>
                </SectionHead>
                <CardTitle aria-label="Card title" defaultValue="Chapter 1" />
                <CardText aria-label="Synopsis" spellCheck={false} defaultValue="Screams rang through the cold night air." />
                <SectionHead $ruled>
                  <Down c="#7c7c7c" w={9} />
                  <SectionTitle>General</SectionTitle>
                </SectionHead>
                <Fields>
                  <MetaSelect id="label" name="Label:" value="No Label" />
                  <MetaSelect id="status" name="Status:" value="No Status" />
                  <Field>
                    <ModifiedName>Modified: <Updown s={10} /></ModifiedName>
                    <time dateTime="2013-01-02T07:10">2 Jan 2013 07:10</time>
                  </Field>
                  {["Include in Compile", "Page Break Before", "Compile As-Is"].map((name) => (
                    <Field key={name}>
                      <FieldName htmlFor={name}>{name}</FieldName>
                      <Check type="checkbox" id={name} />
                    </Field>
                  ))}
                </Fields>
                <SectionHead $ruled>
                  <SectionTitle $plain>Document Notes</SectionTitle>
                  <CardTools><Updown s={10} /></CardTools>
                </SectionHead>
                <NotesArea>
                  <Notes aria-label="Document notes" />
                  <NotesTrack />
                </NotesArea>
                <InspectorTabs>
                  <Tab $w={16} aria-label="Resize"><Grip /></Tab>
                  <Tab $on aria-label="Notes"><PadIcon /></Tab>
                  <Tab aria-label="References"><BooksIcon /></Tab>
                  <Tab aria-label="Keywords"><KeyIcon /></Tab>
                  <Tab aria-label="Custom meta-data"><TagIcon /></Tab>
                  <Tab aria-label="Snapshots"><CameraIcon /></Tab>
                  <Tab><NoteMark>n.</NoteMark></Tab>
                  <Tab aria-label="Lock"><LockIcon /></Tab>
                </InspectorTabs>
              </Inspector>
            </Panes>
          </Work>
        </Body>
      </Window>
    </Desktop>
  );
}
